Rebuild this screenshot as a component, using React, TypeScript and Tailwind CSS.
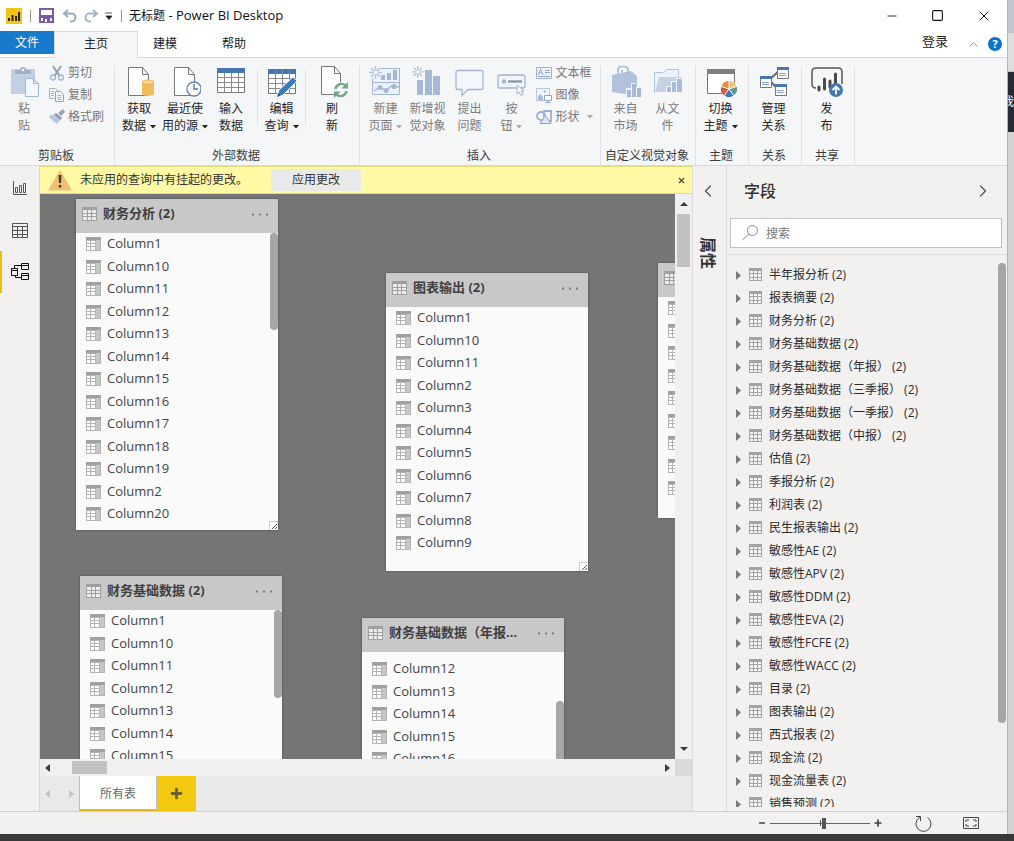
import React from "react";
import { ChevronLeft, ChevronRight, ChevronUp, Minus, Plus, Square, X } from "lucide-react";

const FONT = "font-['Open_Sans','Noto_Sans_CJK_SC',sans-serif]";

/* ---------- shared glyphs ---------- */

function Caret({ dim = false }: { dim?: boolean }) {
  return (
    <svg width="6" height="4" viewBox="0 0 6 4" className={dim ? "ml-1 inline-block fill-[#a9a9a9] align-middle" : "ml-1 inline-block fill-[#222] align-middle"}>
      <path d="M0 0h6L3 3.5z" />
    </svg>
  );
}

function TableGlyph() {
  return (
    <svg width="13" height="13" viewBox="0 0 13 13" className="shrink-0">
      <path d="M0 0h13v13H0z" fill="#a3a3a3" />
      <path d="M1 3h3v2H1zM5 3h3v2H5zM9 3h3v2H9zM1 6h3v3H1zM5 6h3v3H5zM9 6h3v3H9zM1 10h3v2H1zM5 10h3v2H5zM9 10h3v2H9z" fill="#f7f6f5" />
    </svg>
  );
}

function HeaderGlyph() {
  return (
    <svg width="15" height="14" viewBox="0 0 15 14" className="shrink-0">
      <path d="M0 0h15v14H0z" fill="#a0a0a0" />
      <path d="M1 3h4v3H1zM6 3h3v3H6zM10 3h4v3h-4zM1 7h4v2H1zM6 7h3v2H6zM10 7h4v2h-4zM1 10h4v3H1zM6 10h3v3H6zM10 10h4v3h-4z" fill="#ececec" />
    </svg>
  );
}

function ColumnGlyph() {
  return (
    <svg width="15" height="14" viewBox="0 0 15 14" className="shrink-0">
      <path d="M0 0h15v14H0z" fill="#b4b4b4" />
      <path d="M0 0h15v3H0z" fill="#a0a0a0" />
      <path d="M1 4h3v2H1zM5 4h4v2H5zM1 7h3v2H1zM5 7h4v2H5zM1 10h3v3H1zM5 10h4v3H5z" fill="#fff" />
      <path d="M10 3h4v10h-4z" fill="#c6c6c6" />
    </svg>
  );
}

/* ---------- ribbon icons ---------- */

const Big = ({ children }: { children: React.ReactNode }) => (
  <svg width="32" height="32" viewBox="0 0 32 32" fill="none" className="shrink-0">
    {children}
  </svg>
);

const Page = () => <path d="M5.500 1.500h14l6 7v21h-20z M19.500 1.500v7h6" fill="#fff" stroke="#777" />;

const PasteIcon = () => (
  <Big>
    <g transform="translate(2 0)">
      <path d="M1 3h24v25H1z" fill="#c3d0e4" />
      <path d="M5 8h16V4h-5a3 3 0 0 0-6 0H5z" fill="#a3b1c8" />
      <circle cx="13" cy="4" r="1.300" fill="#fff" />
      <path d="M15.500 12.500h8l5 5v13h-13z M23.500 12.500v5h5" fill="#f3f7fd" stroke="#a3b8d8" />
    </g>
  </Big>
);
const GetDataIcon = () => (
  <Big>
    <Page />
    <path d="M19 16c0-2.500 12-2.500 12 0v12c0 2.500-12 2.500-12 0z" fill="#f0bd5b" />
    <ellipse cx="25" cy="16" rx="6" ry="2" fill="#f8d892" stroke="#e3aa46" strokeWidth=".6" />
  </Big>
);
const RecentIcon = () => (
  <Big>
    <Page />
    <circle cx="25" cy="23" r="7" fill="#fff" stroke="#6483b0" strokeWidth="1.300" />
    <path d="M25 18v5h4" stroke="#4d6e9e" strokeWidth="1.300" />
  </Big>
);
const GridIcon = () => (
  <Big>
    <path d="M2.500 2.500h27v24h-27z" fill="#fff" stroke="#777" />
    <path d="M2 2h28v5H2z" fill="#4476b0" />
    <path d="M2.500 11.500h27M2.500 16.500h27M2.500 21.500h27M9.500 7v20M16.500 7v20M23.500 7v20" stroke="#8a8a8a" />
  </Big>
);
const EditQueryIcon = () => (
  <Big>
    <path d="M2.500 3.500h27v24h-27z" fill="#fff" stroke="#777" />
    <path d="M2 3h28v5H2z" fill="#4476b0" />
    <path d="M2.500 12.500h27M2.500 17.500h27M2.500 22.500h27M9.500 3v24M16.500 3v24M23.500 3v24" stroke="#8a8a8a" />
    <path d="m11 31 2-7L27 11l4 4-14 14z" fill="#3f79b8" stroke="#f5f6f8" />
    <path d="m11 31 1.300-4 2.500 2.600z" fill="#28598f" />
  </Big>
);
const RefreshIcon = () => (
  <Big>
    <path d="M5.500.500h13l6 7v21h-19z M18.500.500v7h6" fill="#fff" stroke="#777" />
    <circle cx="25" cy="24" r="8" fill="#f5f6f8" />
    <path d="M19.500 23a6 6 0 0 1 10-3.500M30.500 25a6 6 0 0 1-10 3.500" stroke="#74a68a" strokeWidth="2.400" />
    <path d="M32 16v6.500h-6.500zM18 32v-6.500h6.500z" fill="#74a68a" />
  </Big>
);
const Burst = () => (
  <g>
    <path d="M6.500 0v13M0 6.500h13M2 2l9 9M11 2l-9 9" stroke="#b3c3dc" strokeWidth="1.600" />
    <circle cx="6.500" cy="6.500" r="2" fill="#f5f6f8" />
  </g>
);
const NewPageIcon = () => (
  <Big>
    <path d="M3.500 2.500h27v26h-27zM3.500 16.500h27" fill="#edf2fa" stroke="#a3b6d5" />
    <path d="M12 9h4v5h-4zM18 7h4v7h-4zM24 4h4v10h-4z" fill="#a3b6d5" />
    <path d="m5 25 6-4 6 4 5-5 8 1" stroke="#a3b6d5" strokeWidth="1.500" />
    <circle cx="11" cy="21.500" r="2.500" fill="#a3b6d5" /><circle cx="17" cy="24.500" r="2.500" fill="#a3b6d5" /><circle cx="25" cy="20.500" r="2.500" fill="#a3b6d5" />
    <circle cx="6.500" cy="6.500" r="6.500" fill="#f5f6f8" />
    <Burst />
  </Big>
);
const NewVisualIcon = () => (
  <Big>
    <path d="M6 14h6v15H6zM14 4h7v25h-7zM22 10h7v19h-7z" fill="#a5b8d6" />
    <g transform="translate(1 0) scale(.9)"><Burst /></g>
  </Big>
);
const AskIcon = () => (
  <Big>
    <path d="M5 4.500h23q2 0 2 2v15q0 2-2 2H15l-6 6v-6H5q-2 0-2-2v-15q0-2 2-2z" fill="#f3f7fd" stroke="#a3b6d5" strokeWidth="1.300" />
  </Big>
);
const ButtonIcon = () => (
  <Big>
    <rect x="3" y="9" width="27" height="13" rx="2" fill="#f1f5fb" stroke="#9fb3d3" strokeWidth="1.300" />
    <circle cx="9" cy="15.500" r="2.200" fill="#a3b6d5" />
    <path d="M13 15.500h14" stroke="#8c9bb3" strokeWidth="2.500" />
    <path d="M22 19v9l2.200-2 1.800 3.500 2-1-1.800-3.500h2.800z" fill="#fff" stroke="#9fb3d3" />
  </Big>
);
const MarketIcon = () => (
  <Big>
    <path d="m2 9 19-4 6 5v15L15 28 2 26z" fill="#b1c2dd" />
    <path d="M8 8V3q0-2 3-2.500h4Q18 1 18 4v4M12 7V4" stroke="#a5b6d0" strokeWidth="1.500" />
    <path d="M16 22h5v-5h5v4h5v11H16z" fill="#f5f6f8" />
    <path d="M17 24h4v7h-4zM22 18h4v13h-4zM27 22h4v9h-4z" fill="#a5b8d6" />
  </Big>
);
const FileVisualIcon = () => (
  <Big>
    <path d="M2.500 26.500v-20h9l3-3h12v8" fill="#edf2fa" stroke="#b4c5df" />
    <path d="m3 26 4-15h23l-4 15z" fill="#c5d2e6" />
    <path d="M14 20h5v-5h5v-3h6v15H14z" fill="#f5f6f8" />
    <path d="M15 21h4v5h-4zM20 16h4v10h-4zM25 13h5v13h-5z" fill="#a9bbd8" />
  </Big>
);
const ThemeIcon = () => (
  <Big>
    <path d="M2.500 3.500h27v24h-27z" fill="#fff" stroke="#777" />
    <path d="M2 3h28v5H2z" fill="#7f7f7f" />
    <circle cx="24" cy="23" r="8.500" fill="#fff" />
    <g transform="translate(0 -1)">
      <path d="M24 24V16a8 8 0 0 1 7.600 5.500z" fill="#f2c078" />
      <path d="m24 24 7.600-2.500A8 8 0 0 1 28.700 30.500z" fill="#5b9a8b" />
      <path d="m24 24 4.700 6.500a8 8 0 0 1-9.400 0z" fill="#4478b5" />
      <path d="m24 24-4.700 6.500a8 8 0 0 1-2.900-9z" fill="#d6573a" />
      <path d="m24 24-7.600-2.500A8 8 0 0 1 24 16z" fill="#ea8a3b" />
      <path d="M24 24v-8M24 24l7.600-2.500M24 24l4.700 6.500M24 24l-4.700 6.500M24 24l-7.600-2.500" stroke="#fff" />
    </g>
  </Big>
);
const RelationIcon = () => (
  <Big>
    <path d="m11 14 10-9M13 16l6 6" stroke="#666" strokeWidth="2" />
    <path d="M19.500 1.500h11v11h-11zM2.500 10.500h11v11h-11zM17.500 18.500h11v11h-11z" fill="#fff" stroke="#777" />
    <path d="M19 1h12v3H19zM2 10h12v3H2zM17 18h12v3H17z" fill="#4478b5" />
    <path d="M21 7.500h7M21 9.500h7M4 16.500h7M4 18.500h7M19 24.500h7M19 26.500h7" stroke="#8aa6cc" />
  </Big>
);
const PublishIcon = () => (
  <Big>
    <path d="M5 22q-4 0-4-4V6q0-4 4-4h22q4 0 4 4v12" fill="none" stroke="#555" strokeWidth="1.500" />
    <path d="M8 21v3M13.500 13v10M19 15v6M24.500 8v9" stroke="#4a4a4a" strokeWidth="3" strokeLinecap="round" />
    <circle cx="25" cy="24" r="7" fill="#4478b5" />
    <path d="M25 28.500v-8M21.500 24l3.500-3.500 3.500 3.500" stroke="#fff" strokeWidth="1.800" />
  </Big>
);

/* small 16px icons */
const Small = ({ children }: { children: React.ReactNode }) => (
  <svg width="16" height="16" viewBox="0 0 16 16" fill="none" className="shrink-0">
    {children}
  </svg>
);
const CutIcon = () => (
  <Small>
    <path d="m4 1 6.500 10M12 1 5.500 11" stroke="#8fa0b8" strokeWidth="2" />
    <circle cx="4" cy="12.500" r="2.500" stroke="#9fb3d3" strokeWidth="1.300" /><circle cx="12" cy="12.500" r="2.500" stroke="#9fb3d3" strokeWidth="1.300" />
  </Small>
);
const CopyIcon = () => (
  <Small>
    <path d="M.500 1.500h6l2 2v8h-8z" fill="#f3f7fd" stroke="#9fb3d3" />
    <path d="M6.500 4.500h5l3 3v7h-8z" fill="#f3f7fd" stroke="#8fa5c8" />
    <path d="M2 4.500h3M2 6.500h3M2 8.500h3M8.500 8.500h4M8.500 10.500h4M8.500 12.500h4" stroke="#9fb3d3" />
  </Small>
);
const BrushIcon = () => (
  <Small>
    <path d="m9 4 5-4 2 3-4 4z" fill="#97a3b5" /><path d="m7 4 6 5-2 2-6-5z" fill="#8c99ad" />
    <path d="m1 6 4-0.500 6 6L8 15q-4-3-8-7z" fill="#b7c8e2" />
  </Small>
);
const TextBoxIcon = () => (
  <Small>
    <path d="M.500 2.500h15v11H.500z" fill="#f1f5fb" stroke="#9fb3d3" />
    <path d="m2 10 2.500-6L7 10M3 8h3M9 5.500h5M9 7.500h5M2 11.500h12" stroke="#8fa5c8" />
  </Small>
);
const ImageIcon = () => (
  <Small>
    <path d="M.500 1.500h13v12H.500z" fill="#f1f5fb" stroke="#b4c5df" />
    <path d="M2 13V9l2-2 3 3v3z" fill="#a9bbd8" /><circle cx="9" cy="4.500" r="1.300" fill="#a9bbd8" />
    <path d="M8.500 8.500h7v5h-7zM12 13.500v2M9.500 15.500h5" fill="#fff" stroke="#8fa5c8" />
  </Small>
);
const ShapeIcon = () => (
  <Small>
    <circle cx="5" cy="7" r="4" stroke="#9aaed0" strokeWidth="1.800" />
    <path d="M8 2h7v10H8z" stroke="#9aaed0" strokeWidth="1.800" />
    <path d="m9.500 6.500 5.500 8H4z" fill="#dfe7f3" stroke="#8fa5c8" />
  </Small>
);

/* ---------- ribbon pieces ---------- */

type BigButtonProps = { icon: React.ReactNode; top: string; bottom: string; caret?: boolean; dim?: boolean; width: string };

function BigButton({ icon, top, bottom, caret, dim, width }: BigButtonProps) {
  return (
    <button type="button" className={`flex shrink-0 flex-col items-center ${width} ${dim ? "text-[#7c7c7c]" : "text-[#262626]"}`}>
      {icon}
      <span className="mt-0.5 whitespace-nowrap text-center text-xs leading-[17px]">
        {top}
        <br />
        {bottom}
        {caret && <Caret dim={dim} />}
      </span>
    </button>
  );
}

function SmallButton({ icon, label, caret }: { icon: React.ReactNode; label: string; caret?: boolean }) {
  return (
    <button type="button" className="flex h-[22px] items-center gap-[3px] whitespace-nowrap text-xs text-[#777]">
      {icon}
      <span>{label}</span>
      {caret && <Caret dim />}
    </button>
  );
}

function Group({ label, width, children }: { label: string; width: string; children: React.ReactNode }) {
  return (
    <section className={`flex shrink-0 flex-col border-r border-[#dfe2e6] ${width}`}>
      <div className="flex h-[78px] justify-center pr-[3px]">{children}</div>
      <h2 className="mt-1.5 flex justify-center whitespace-nowrap pr-0.5 text-xs leading-[18px] text-[#3c3c3c]">{label}</h2>
    </section>
  );
}

const Divider = () => <span className="mx-[3px] mt-1 h-14 w-px shrink-0 bg-[#dfe2e6]" />;

function TitleBar() {
  return (
    <header className="flex h-[31px] shrink-0 items-center pl-1.5 text-[#111]">
      <svg width="16" height="16" viewBox="0 0 16 16"><path d="M0 0h16v16H0z" fill="#f0c514" /><path d="M2 10h2v3H2zM5.500 7h2v6h-2zM9 8h2v5H9zM12 4h2v9h-2z" fill="#2b2410" /></svg>
      <span className="ml-2 h-3 w-px bg-[#999]" />
      <button type="button" aria-label="保存" className="ml-2">
        <svg width="15" height="15" viewBox="0 0 15 15"><path d="M1 1h13v13H1z" fill="#fff" stroke="#7d57a8" strokeWidth="2" /><path d="M1 7h13v3H1z" fill="#7d57a8" /><path d="M4 9h7v5H4z" fill="#7d57a8" /><path d="M6 11h2v3H6z" fill="#fff" /></svg>
      </button>
      <button type="button" aria-label="撤消" className="ml-2">
        <svg width="15" height="14" viewBox="0 0 15 14" fill="none" stroke="#9baabd" strokeWidth="2"><path d="M6 1 2 4.500 6 8M2 4.500h7.500a4 4 0 0 1 0 8H8" /></svg>
      </button>
      <button type="button" aria-label="恢复" className="ml-[7px]">
        <svg width="15" height="14" viewBox="0 0 15 14" fill="none" stroke="#a9b4c3" strokeWidth="2"><path d="m9 1 4 3.500L9 8M13 4.500H5.500a4 4 0 0 0 0 8H7" /></svg>
      </button>
      <button type="button" aria-label="自定义快速访问工具栏" className="ml-1.5">
        <svg width="8" height="8" viewBox="0 0 8 8"><path d="M0 1h7M1 4h6L4 7.500z" stroke="#222" fill="#222" strokeWidth=".8" /></svg>
      </button>
      <span className="ml-2 h-3 w-px bg-[#999]" />
      <h1 className="ml-[7px] grow text-[13px]"><span className="text-xs">无标题</span> - Power BI Desktop</h1>
      <button type="button" aria-label="最小化" className="flex w-[46px] justify-center"><Minus size={14} strokeWidth={1.5} /></button>
      <button type="button" aria-label="最大化" className="flex w-[45px] justify-center"><Square size={13} strokeWidth={2} /></button>
      <button type="button" aria-label="关闭" className="flex w-[47px] justify-center"><X size={16} strokeWidth={1.5} /></button>
    </header>
  );
}

function TabRow() {
  return (
    <nav className="flex h-[26px] shrink-0 items-stretch text-xs text-[#222]">
      <button type="button" className="mb-[3px] w-[54px] bg-[#1979ca] text-white">文件</button>
      <button type="button" className="z-10 -mb-px w-[84px] border-x border-t border-[#d9dce0] bg-[#f5f6f8] pb-0.5">主页</button>
      <button type="button" className="w-[54px]">建模</button>
      <button type="button" className="ml-[15px] w-[54px]">帮助</button>
      <div className="ml-auto flex items-center pr-[5px]">
        <button type="button" className="pb-1 text-[13px]">登录</button>
        <button type="button" aria-label="折叠功能区" className="ml-[18px] text-[#8a8a8a]"><ChevronUp size={15} strokeWidth={1.5} /></button>
        <button type="button" aria-label="帮助" className="ml-[7px] size-3.5 rounded-full bg-[#0a72c9] text-[11px] leading-[14px] font-bold text-white">?</button>
      </div>
    </nav>
  );
}

function Ribbon() {
  return (
    <div className="flex h-[109px] shrink-0 overflow-hidden border-y border-[#d5d8dc] bg-[#f5f6f8] pt-2">
      <Group label="剪贴板" width="w-[115px]">
        <div className="flex w-full">
          <BigButton icon={<PasteIcon />} top="粘" bottom="贴" dim width="ml-0.5 w-[44px]" />
          <div className="-mt-1 ml-[3px] flex flex-col">
            <SmallButton icon={<CutIcon />} label="剪切" />
            <SmallButton icon={<CopyIcon />} label="复制" />
            <SmallButton icon={<BrushIcon />} label="格式刷" />
          </div>
        </div>
      </Group>
      <Group label="外部数据" width="w-[245px]">
        <BigButton icon={<GetDataIcon />} top="获取" bottom="数据" caret width="w-[46px]" />
        <BigButton icon={<RecentIcon />} top="最近使" bottom="用的源" caret width="w-[46px]" />
        <BigButton icon={<GridIcon />} top="输入" bottom="数据" width="w-[46px]" />
        <Divider />
        <BigButton icon={<EditQueryIcon />} top="编辑" bottom="查询" caret width="w-[41px]" />
        <Divider />
        <BigButton icon={<RefreshIcon />} top="刷" bottom="新" width="w-[46px]" />
      </Group>
      <Group label="插入" width="w-[241px]">
        <BigButton icon={<NewPageIcon />} top="新建" bottom="页面" caret dim width="w-[42px]" />
        <BigButton icon={<NewVisualIcon />} top="新增视" bottom="觉对象" dim width="w-[42px]" />
        <BigButton icon={<AskIcon />} top="提出" bottom="问题" dim width="w-[42px]" />
        <BigButton icon={<ButtonIcon />} top="按" bottom="钮" caret dim width="w-[42px]" />
        <div className="-mt-1 ml-1 flex flex-col">
          <SmallButton icon={<TextBoxIcon />} label="文本框" />
          <SmallButton icon={<ImageIcon />} label="图像" />
          <SmallButton icon={<ShapeIcon />} label="形状" caret />
        </div>
      </Group>
      <Group label="自定义视觉对象" width="w-[95px]">
        <BigButton icon={<MarketIcon />} top="来自" bottom="市场" dim width="w-[42px]" />
        <BigButton icon={<FileVisualIcon />} top="从文" bottom="件" dim width="w-[42px]" />
      </Group>
      <Group label="主题" width="w-[53px]">
        <BigButton icon={<ThemeIcon />} top="切换" bottom="主题" caret width="w-[46px]" />
      </Group>
      <Group label="关系" width="w-[53px]">
        <BigButton icon={<RelationIcon />} top="管理" bottom="关系" width="w-[46px]" />
      </Group>
      <Group label="共享" width="w-[53px]">
        <BigButton icon={<PublishIcon />} top="发" bottom="布" width="w-[46px]" />
      </Group>
    </div>
  );
}

/* ---------- workspace ---------- */

function ViewRail() {
  return (
    <nav className="flex w-10 shrink-0 flex-col border-r border-[#d6d6d6] bg-[#f2f1f0] pt-px">
      <button type="button" aria-label="报表" className="flex h-[42px] items-center justify-center">
        <svg width="16" height="16" viewBox="0 0 16 16" fill="none" stroke="#555"><path d="M1.500 1v13.500H15M3.500 7.500h2v5h-2zM7.500 5.500h2v7h-2zM11.500 3.500h2v9h-2z" /></svg>
      </button>
      <button type="button" aria-label="数据" className="flex h-[42px] items-center justify-center">
        <svg width="16" height="15" viewBox="0 0 16 15" fill="none" stroke="#555"><path d="M.500.500h15v14H.500zM.500 3.500h15M.500 7.500h15M.500 11.500h15M5.500 3.500v11M10.500 3.500v11" /></svg>
      </button>
      <button type="button" aria-label="模型" className="flex h-[42px] items-center justify-center border-l-2 border-[#e9c11b] pr-0.5">
        <svg width="18" height="18" viewBox="0 0 18 18" fill="none" stroke="#111"><path d="M.500 5.500h6v7h-6zM.500 7.500h6M10.500.500h7v6h-7zM10.500 2.500h7M10.500 10.500h7v6h-7zM10.500 12.500h7M3.500 5.500v-3h7M4.500 12.500v2h6" /></svg>
      </button>
    </nav>
  );
}

function Notice() {
  return (
    <div role="alert" className="flex h-7 shrink-0 items-center border-y border-[#e3dc7c] bg-[#fff9a6] pl-2 text-xs text-[#333]">
      <svg width="24" height="21" viewBox="0 0 24 21"><path d="m12 0 12 20.500H0z" fill="#efbf74" /><path d="M10.500 5h3l-.5 8h-2zM10.800 15h2.400v2.500h-2.400z" fill="#4a3c28" /></svg>
      <p className="ml-2">未应用的查询中有挂起的更改。</p>
      <button type="button" className="ml-[23px] h-[22px] w-[90px] bg-[#e9e9e9]">应用更改</button>
      <button type="button" aria-label="关闭" className="mr-1.5 ml-auto text-[#444]"><X size={9} strokeWidth={3} /></button>
    </div>
  );
}

type CardProps = { title: string; columns: string[]; place: string; pad?: string; bar?: string; grip?: boolean };

function TableCard({ title, columns, place, pad = "", bar, grip }: CardProps) {
  return (
    <article className={`absolute flex w-[202px] flex-col overflow-hidden bg-[#fafafa] shadow-[0_0_2px_#4a4a4a] ${place}`}>
      <header className="flex h-[34px] shrink-0 items-center gap-1.5 bg-[#c8c8c8] px-1.5 pb-1">
        <HeaderGlyph />
        <h3 className="w-[135px] truncate font-['Noto_Sans','Noto_Sans_CJK_SC',sans-serif] text-[13px] font-bold text-[#3f3f3f]">{title}</h3>
        <button type="button" aria-label="更多选项" className="ml-auto pr-[3px]">
          <svg width="17" height="3" viewBox="0 0 17 3" fill="#7c7c7c"><path d="M0 .500h2v2H0zM7 .500h2v2H7zM14 .500h2v2h-2z" /></svg>
        </button>
      </header>
      <ul className={`min-h-0 grow overflow-hidden ${pad}`}>
        {columns.map((name) => (
          <li key={name} className="flex h-[22px] items-center gap-1.5 pl-2.5 text-[13px] text-[#444] even:h-[23px]">
            <ColumnGlyph />
            {name}
          </li>
        ))}
      </ul>
      {bar && <span className={`absolute right-0 w-2 rounded-full bg-[#a6a6a6] ${bar}`} />}
      {grip && (
        <svg width="9" height="9" viewBox="0 0 9 9" className="absolute right-0 bottom-0"><path d="M.500 9V.500H9" fill="#fff" stroke="#ccc" /><path d="m3 8 5-5M6 8l2-2" stroke="#555" /></svg>
      )}
    </article>
  );
}

const cols = (...ids: number[]) => ids.map((n) => `Column${n}`);

function Canvas() {
  return (
    <div className="relative min-w-0 grow overflow-hidden bg-[#757575]">
      <TableCard title="财务分析 (2)" columns={cols(1, 10, 11, 12, 13, 14, 15, 16, 17, 18, 19, 2, 20, 21)} place="left-9 top-[5px] h-[331px]" bar="top-[34px] h-[97px]" grip />
      <TableCard title="图表输出 (2)" columns={cols(1, 10, 11, 2, 3, 4, 5, 6, 7, 8, 9)} place="left-[346px] top-[79px] h-[298px]" grip />
      <TableCard title="利润表 (2)" columns={cols(1, 2, 3, 4, 5, 6, 7, 8, 9)} place="left-[618px] top-[69px] h-[255px]" />
      <TableCard title="财务基础数据 (2)" columns={cols(1, 10, 11, 12, 13, 14, 15)} place="left-10 top-[382px] h-[331px]" bar="top-[34px] h-[88px]" />
      <TableCard title="财务基础数据（年报） (2)" columns={cols(12, 13, 14, 15, 16)} place="left-[322px] top-[424px] h-[331px]" pad="pt-1.5" bar="top-[83px] h-24" />
    </div>
  );
}

function Tri({ d, dim }: { d: string; dim?: boolean }) {
  return <svg width="8" height="8" viewBox="0 0 8 8" className={dim ? "fill-[#c4c4c4]" : "fill-[#3c3c3c]"}><path d={d} /></svg>;
}

const UP = "M0 6h8L4 2z";
const DOWN = "M0 2h8L4 6z";
const LEFT = "M6 0v8L1 4z";
const RIGHT = "M2 0v8l5-4z";

function ModelView() {
  return (
    <main className="flex min-w-0 grow flex-col border-r border-[#dcdcdc]">
      <Notice />
      <div className="flex min-h-0 grow">
        <Canvas />
        <div className="flex w-[17px] shrink-0 flex-col items-center bg-[#f0f0f0]">
          <button type="button" aria-label="向上滚动" className="flex h-5 items-center"><Tri d={UP} /></button>
          <span className="h-[53px] w-[13px] bg-[#c2c2c2]" />
          <button type="button" aria-label="向下滚动" className="mt-auto flex h-5 items-center"><Tri d={DOWN} /></button>
        </div>
      </div>
      <div className="flex h-[17px] shrink-0 items-center bg-[#f0f0f0]">
        <button type="button" aria-label="向左滚动" className="flex w-8 pl-1"><Tri d={LEFT} /></button>
        <span className="h-[13px] w-[35px] bg-[#c2c2c2]" />
        <button type="button" aria-label="向右滚动" className="mr-1 ml-auto"><Tri d={RIGHT} /></button>
        <span className="h-full w-[17px] bg-[#dadada]" />
      </div>
      <div className="flex h-[35px] shrink-0 bg-[#e9e9e9] text-xs">
        <div className="flex w-[39px] items-center justify-between px-1">
          <button type="button" aria-label="上一页"><Tri d={LEFT} dim /></button>
          <button type="button" aria-label="下一页"><Tri d={RIGHT} dim /></button>
        </div>
        <button type="button" className="w-[78px] border-x border-b-2 border-x-[#bdbdbd] border-b-[#e3bc1c] bg-white pt-0.5 text-[#666]">所有表</button>
        <button type="button" aria-label="新建布局" className="flex w-[39px] items-center justify-center bg-[#f2c811] text-[#6a5f30]"><Plus size={15} strokeWidth={4.500} /></button>
      </div>
    </main>
  );
}

/* ---------- right side panes ---------- */

const FIELDS = [
  "半年报分析 (2)", "报表摘要 (2)", "财务分析 (2)", "财务基础数据 (2)", "财务基础数据（年报） (2)", "财务基础数据（三季报） (2)",
  "财务基础数据（一季报） (2)", "财务基础数据（中报） (2)", "估值 (2)", "季报分析 (2)", "利润表 (2)", "民生报表输出 (2)",
  "敏感性AE (2)", "敏感性APV (2)", "敏感性DDM (2)", "敏感性EVA (2)", "敏感性FCFE (2)", "敏感性WACC (2)",
  "目录 (2)", "图表输出 (2)", "西式报表 (2)", "现金流 (2)", "现金流量表 (2)", "销售预测 (2)",
];

function PropertiesPane() {
  return (
    <aside className="flex w-[34px] shrink-0 flex-col items-start border-r border-[#dedede] bg-[#f2f1f0] pl-[5px]">
      <button type="button" aria-label="展开属性" className="mt-[15px] text-[#555]"><ChevronLeft size={20} strokeWidth={1.500} /></button>
      <h2 className="mt-9 text-base leading-5 font-bold text-[#333] [text-orientation:sideways] [writing-mode:vertical-rl]">属性</h2>
    </aside>
  );
}

function FieldsPane() {
  return (
    <aside className="flex w-[280px] shrink-0 flex-col bg-[#f2f1f0]">
      <div className="mb-0.5 flex h-[50px] shrink-0 items-center justify-between pr-3.5 pl-[17px]">
        <h2 className="text-base font-medium text-[#333]">字段</h2>
        <button type="button" aria-label="折叠字段" className="text-[#555]"><ChevronRight size={20} strokeWidth={1.500} /></button>
      </div>
      <label className="mr-[5px] ml-[3px] flex h-[30px] shrink-0 items-center gap-2 border border-[#c4c2c0] bg-white pl-[11px]">
        <svg width="16" height="16" viewBox="0 0 16 16" fill="none" stroke="#8a8a8a"><circle cx="10.500" cy="5.500" r="5" /><path d="M7 9 .500 15" /></svg>
        <input type="text" aria-label="搜索" placeholder="搜索" className="min-w-0 grow bg-transparent pt-0.5 text-xs outline-none placeholder:text-[#777]" />
      </label>
      <div className="relative mt-1.5 mb-1 min-h-0 grow overflow-hidden border-t border-[#dedede] pt-2">
        <ul>
          {FIELDS.map((name) => (
            <li key={name} className="flex h-[23px] items-center pl-[9px] text-xs whitespace-pre text-[#2b2b2b]">
              <svg width="5" height="9" viewBox="0 0 5 9" fill="#7c7c7c" className="mt-0.5"><path d="M0 0v9l5-4.500z" /></svg>
              <span className="mr-[7px] ml-2"><TableGlyph /></span>
              {name}
            </li>
          ))}
        </ul>
        <span className="absolute top-2 right-px h-[460px] w-2 rounded-full bg-[#a6a6a6]" />
      </div>
    </aside>
  );
}

function StatusBar() {
  return (
    <footer className="flex h-[23px] shrink-0 items-center justify-end border-t border-[#cfcfcf] bg-[#f2f1f0] pr-7 text-[#444]">
      <button type="button" aria-label="缩小"><Minus size={8} strokeWidth={5} /></button>
      <div className="relative mr-[3px] ml-1 flex w-[100px] items-center">
        <span className="absolute left-[50px] h-1.5 w-px bg-[#555]" />
        <input
          type="range"
          aria-label="缩放"
          defaultValue={54}
          className="h-3 w-full appearance-none bg-transparent [&::-webkit-slider-runnable-track]:h-px [&::-webkit-slider-runnable-track]:bg-[#666] [&::-webkit-slider-thumb]:-mt-[5px] [&::-webkit-slider-thumb]:h-[11px] [&::-webkit-slider-thumb]:w-1 [&::-webkit-slider-thumb]:appearance-none [&::-webkit-slider-thumb]:bg-[#555]"
        />
      </div>
      <button type="button" aria-label="放大"><Plus size={10} strokeWidth={4} /></button>
      <button type="button" aria-label="刷新" className="ml-8">
        <svg width="17" height="17" viewBox="0 0 17 17" fill="none" stroke="#444"><path d="M5 2.200a7.500 7.500 0 1 0 7.500.300M1 1.500h4.500V6" /></svg>
      </button>
      <button type="button" aria-label="适应页面大小" className="ml-[31px]">
        <svg width="16" height="12" viewBox="0 0 16 12" fill="none" stroke="#444"><path d="M.500.500h15v11H.500zM3 5V3h3M10 3h3v2M13 7v2h-3M6 9H3V7" /></svg>
      </button>
    </footer>
  );
}

export default function App() {
  return (
    <div className={`flex h-screen flex-col bg-[#393837] ${FONT}`}>
      <div className="flex min-h-0 grow">
        <div className="flex min-w-0 grow flex-col bg-white">
          <TitleBar />
          <TabRow />
          <Ribbon />
          <div className="flex min-h-0 grow">
            <ViewRail />
            <ModelView />
            <PropertiesPane />
            <FieldsPane />
          </div>
          <StatusBar />
        </div>
        <div className="flex w-[7px] shrink-0 flex-col overflow-hidden border-l border-[#b5b5b5] bg-[#d3d2d2]">
          <span className="h-8 bg-[#c3c7cd]" />
          <span className="h-10 border-y border-[#c4c4c4] bg-[#dedede]" />
          <span className="flex h-[60px] items-center justify-end bg-[#262a35] text-xs text-white">我</span>
        </div>
      </div>
      <div className="h-[7px] shrink-0" />
    </div>
  );
}
